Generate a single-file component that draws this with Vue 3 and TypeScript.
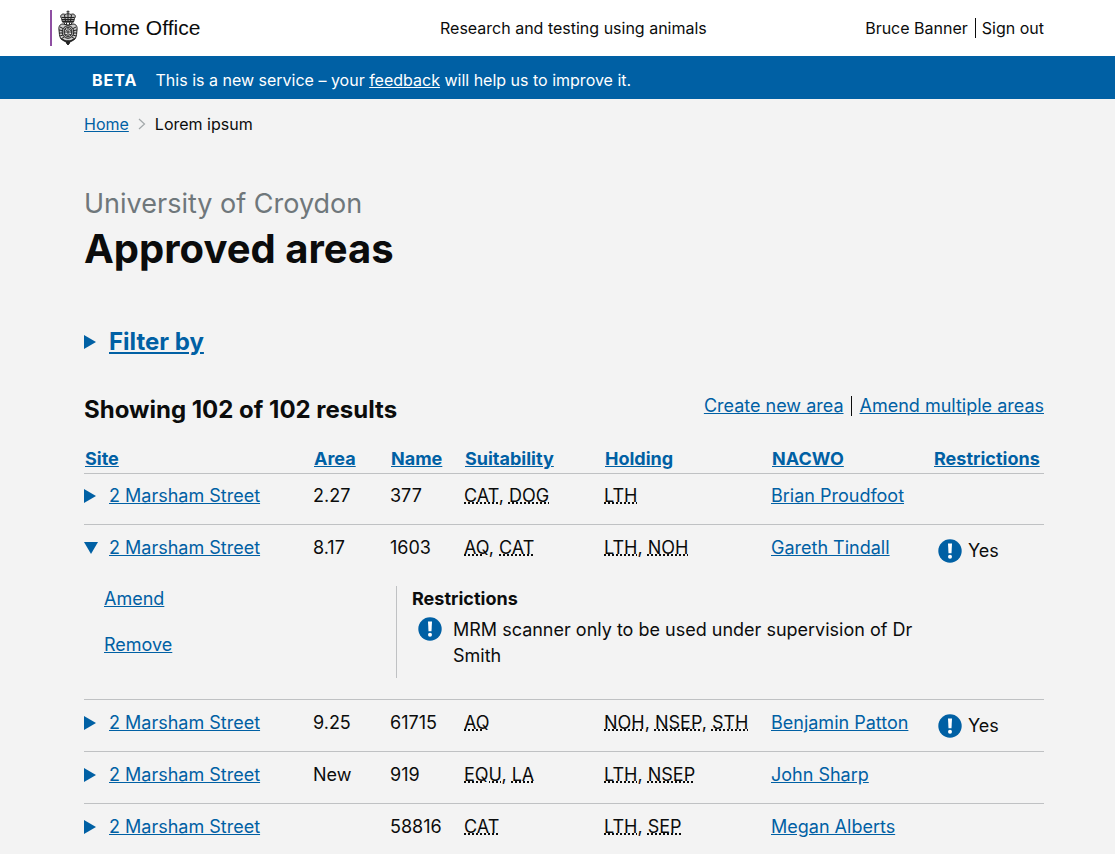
<script setup lang="ts">
import { ref } from 'vue'

interface Area {
  id: number
  site: string
  area: string
  name: string
  suitability: string[]
  holding: string[]
  nacwo: string
  restriction?: string
}

const titles: Record<string, string> = {
  CAT: 'Cats',
  DOG: 'Dogs',
  AQ: 'Aquatic animals',
  EQU: 'Equidae',
  LA: 'Large animals',
  LTH: 'Long term holding',
  NOH: 'No overnight housing',
  NSEP: 'Non-standard environmental parameters',
  STH: 'Short term holding',
  SEP: 'Standard environmental parameters',
}

const columns = ['Site', 'Area', 'Name', 'Suitability', 'Holding', 'NACWO', 'Restrictions']

const areas: Area[] = [
  { id: 1, site: '2 Marsham Street', area: '2.27', name: '377', suitability: ['CAT', 'DOG'], holding: ['LTH'], nacwo: 'Brian Proudfoot' },
  { id: 2, site: '2 Marsham Street', area: '8.17', name: '1603', suitability: ['AQ', 'CAT'], holding: ['LTH', 'NOH'], nacwo: 'Gareth Tindall', restriction: 'MRM scanner only to be used under supervision of Dr Smith' },
  { id: 3, site: '2 Marsham Street', area: '9.25', name: '61715', suitability: ['AQ'], holding: ['NOH', 'NSEP', 'STH'], nacwo: 'Benjamin Patton', restriction: 'Restricted use' },
  { id: 4, site: '2 Marsham Street', area: 'New', name: '919', suitability: ['EQU', 'LA'], holding: ['LTH', 'NSEP'], nacwo: 'John Sharp' },
  { id: 5, site: '2 Marsham Street', area: '', name: '58816', suitability: ['CAT'], holding: ['LTH', 'SEP'], nacwo: 'Megan Alberts' },
]

const open = ref<number[]>([2])
const isOpen = (id: number): boolean => open.value.includes(id)
function toggle(id: number): void {
  open.value = isOpen(id) ? open.value.filter((n) => n !== id) : [...open.value, id]
}
</script>

<template>
  <header class="header">
    <div class="container header-grid">
      <a class="logo" href="#">
        <svg class="crest" width="20" height="36" viewBox="0 0 20 36" aria-hidden="true">
          <g fill="none" stroke="#222" stroke-width="1">
            <path d="M10 .5v4M8.500 1.800h3" />
            <path d="M3.500 8.500C1 5 5 3 7 4.500 8.500 3.500 11.500 3.500 13 4.500 15 3 19 5 16.500 8.500L15.500 12h-11z" fill="#bbb" />
            <path d="M3.500 7.500h13M4 9.500h12M6.500 5l1 6M10 4v7M13.500 5l-1 6" />
            <path d="M4.500 11.500h11" stroke-width="1.600" />
            <path d="M6 12.500l1 2.500M8.500 12.500v3M11.500 12.500v3M14 12.500l-1 2.500" />
            <path d="M5 14C1.500 14 .5 17 1 20s0 6 2 9l3 2 4 1 4-1 3-2c2-3 1.500-6 2-9s-.5-6-4-6l-5 1z" fill="#ccc" />
            <ellipse cx="10" cy="22" rx="5.800" ry="6.300" fill="#aaa" />
            <ellipse cx="10" cy="22" rx="3.800" ry="4.300" fill="#eee" />
            <path d="M10 17.500v9M6 22h8M7 19.500l2 1M11 19.500l2 1M7 24l2 1M11 24l2 1" />
            <path d="M2 17l3 1.500M1 20l3 .5M1 23h3M2 26l3-1M3 29l3-2M18 17l-3 1.500M19 20l-3 .5M19 23h-3M18 26l-3-1M17 29l-3-2" />
            <path d="M4 29c3 3 9 3 12 0" stroke-width="1.400" />
            <path d="M8 32.500l2 2.500 2-2.500zM10 30v3" fill="#222" />
          </g>
        </svg>
        <span>Home Office</span>
      </a>
      <a class="service" href="#">Research and testing using animals</a>
      <nav class="user" aria-label="Account">
        <a href="#">Bruce Banner</a><span class="divider"></span><a href="#">Sign out</a>
      </nav>
    </div>
  </header>

  <div class="banner">
    <div class="container banner-row">
      <strong>BETA</strong>
      <span>This is a new service – your <a href="#">feedback</a> will help us to improve it.</span>
    </div>
  </div>

  <main class="container">
    <nav class="crumbs" aria-label="Breadcrumb">
      <a href="#">Home</a>
      <svg width="8" height="12" viewBox="0 0 8 12" aria-hidden="true">
        <path d="M1 1l5.500 5L1 11" fill="none" stroke="#a3a8aa" stroke-width="1.200" />
      </svg>
      <span>Lorem ipsum</span>
    </nav>

    <p class="caption">University of Croydon</p>
    <h1>Approved areas</h1>

    <button class="toggle filter" type="button">
      <svg class="arrow" width="12" height="14" viewBox="0 0 12 14" aria-hidden="true"><path d="M0 0l12 7L0 14z" /></svg>
      <span>Filter by</span>
    </button>

    <div class="summary">
      <h2>Showing 102 of 102 results</h2>
      <div class="actions">
        <a href="#">Create new area</a><span class="divider"></span><a href="#">Amend multiple areas</a>
      </div>
    </div>

    <table>
      <colgroup>
        <col />
        <col class="c-area" />
        <col class="c-name" />
        <col class="c-suit" />
        <col class="c-hold" />
        <col class="c-nacwo" />
        <col class="c-restr" />
      </colgroup>
      <thead>
        <tr>
          <th v-for="column in columns" :key="column" scope="col"><a href="#">{{ column }}</a></th>
        </tr>
      </thead>
      <tbody v-for="item in areas" :key="item.id">
        <tr>
          <td>
            <button class="toggle" type="button" :aria-expanded="isOpen(item.id)" @click="toggle(item.id)">
              <svg v-if="isOpen(item.id)" class="arrow arrow-down" width="14" height="12" viewBox="0 0 14 12" aria-hidden="true"><path d="M0 0h14L7 12z" /></svg>
              <svg v-else class="arrow" width="12" height="14" viewBox="0 0 12 14" aria-hidden="true"><path d="M0 0l12 7L0 14z" /></svg>
              <span>{{ item.site }}</span>
            </button>
          </td>
          <td>{{ item.area }}</td>
          <td>{{ item.name }}</td>
          <td>
            <template v-for="(code, i) in item.suitability" :key="code"><template v-if="i > 0">, </template><abbr :title="titles[code]">{{ code }}</abbr></template>
          </td>
          <td>
            <template v-for="(code, i) in item.holding" :key="code"><template v-if="i > 0">, </template><abbr :title="titles[code]">{{ code }}</abbr></template>
          </td>
          <td><a href="#">{{ item.nacwo }}</a></td>
          <td>
            <span v-if="item.restriction" class="flag">
              <svg class="alert" width="24" height="24" viewBox="0 0 24 24" aria-hidden="true">
                <circle cx="12" cy="12" r="11.700" fill="#0060a4" />
                <path d="M10 4.500h4l-.5 9.800h-3z" fill="#fff" />
                <circle cx="12" cy="17.700" r="2" fill="#fff" />
              </svg>
              <span>Yes</span>
            </span>
          </td>
        </tr>
        <tr v-if="isOpen(item.id)" class="details">
          <td colspan="7">
            <div class="panel">
              <div class="links">
                <a href="#">Amend</a>
                <a href="#">Remove</a>
              </div>
              <div class="note">
                <template v-if="item.restriction">
                  <h3>Restrictions</h3>
                  <div class="warning">
                    <svg class="alert" width="24" height="24" viewBox="0 0 24 24" aria-hidden="true">
                      <circle cx="12" cy="12" r="11.700" fill="#0060a4" />
                      <path d="M10 4.500h4l-.5 9.800h-3z" fill="#fff" />
                      <circle cx="12" cy="17.700" r="2" fill="#fff" />
                    </svg>
                    <p>{{ item.restriction }}</p>
                  </div>
                </template>
              </div>
            </div>
          </td>
        </tr>
      </tbody>
    </table>
  </main>
</template>

<style>
body {
  margin: 0;
  background: #f3f3f3;
  color: #0b0c0c;
  font-family: Inter, Roboto, 'Liberation Sans', sans-serif;
  font-size: 18px;
  line-height: 26px;
}
</style>

<style scoped>
h1, h2, h3, p {
  margin: 0;
}
a {
  color: #0060a4;
  text-decoration: underline;
}
.container {
  box-sizing: border-box;
  margin: 0 71px 0 84px;
}
.header {
  background: #fff;
}
.header-grid {
  display: grid;
  grid-template-columns: 356px 1fr auto;
  align-items: center;
  height: 56px;
  font-size: 16px;
}
.header-grid a {
  color: #0b0c0c;
  text-decoration: none;
}
.logo {
  display: flex;
  align-items: center;
  gap: 6px;
  width: max-content;
  height: 36px;
  margin-left: -34px;
  padding-left: 6px;
  border-left: 2px solid #8f4fa3;
  font-family: 'Liberation Sans', Arial, sans-serif;
  font-size: 21px;
}
.user,
.actions {
  display: flex;
  align-items: center;
}
.divider {
  width: 1px;
  height: 20px;
  margin: 0 7px;
  background: #0b0c0c;
}
.user .divider {
  margin: 0 6px 0 7px;
}
.actions {
  padding-top: 1px;
}
.actions .divider {
  width: 1px;
  margin: 0 8px 0 7px;
}
.banner {
  background: #0060a4;
  color: #fff;
  font-size: 16px;
}
.banner a {
  color: #fff;
}
.banner-row {
  display: flex;
  align-items: center;
  gap: 18px;
  height: 43px;
  padding: 5px 8px 0;
}
.banner strong {
  letter-spacing: 1px;
}
.crumbs {
  display: flex;
  align-items: center;
  gap: 9px;
  padding-top: 12px;
  font-size: 16px;
}
.caption {
  margin-top: 48px;
  color: #6f777b;
  font-size: 27px;
  line-height: 38px;
}
h1 {
  font-size: 40px;
  line-height: 52px;
}
.toggle {
  display: flex;
  align-items: center;
  gap: 13px;
  padding: 0;
  border: 0;
  background: none;
  color: #0060a4;
  font: inherit;
  cursor: pointer;
}
.toggle span {
  text-decoration: underline;
}
.arrow {
  flex: none;
  fill: #0060a4;
}
.arrow-down {
  margin-right: -2px;
}
.filter {
  margin-top: 51px;
  font-size: 24px;
  font-weight: 700;
  line-height: 32px;
}
.summary {
  display: flex;
  justify-content: space-between;
  align-items: flex-start;
  margin-top: 34px;
}
h2 {
  font-size: 24px;
  line-height: 36px;
}
table {
  width: 100%;
  margin-top: 16px;
  border-collapse: collapse;
  table-layout: fixed;
}
.c-area { width: 77px; }
.c-name { width: 74px; }
.c-suit { width: 140px; }
.c-hold { width: 167px; }
.c-nacwo { width: 162px; }
.c-restr { width: 111px; }
th {
  padding: 2px 0 1px 1px;
  border-bottom: 1px solid #bfc1c3;
  text-align: left;
}
td {
  height: 26px;
  padding: 10px 0 15px;
  vertical-align: top;
  white-space: nowrap;
}
tbody {
  border-bottom: 1px solid #bfc1c3;
}
thead + tbody td {
  padding-top: 9px;
}
tbody:last-child {
  border-bottom: 0;
}
.flag {
  display: flex;
  align-items: center;
  gap: 6px;
  height: 26px;
  margin: 3px 0 -3px 5px;
}
.alert {
  flex: none;
}
.details td {
  padding: 10px 0 21px;
  white-space: normal;
}
.panel {
  display: grid;
  grid-template-columns: 312px 1fr;
}
.links {
  display: flex;
  flex-direction: column;
  align-items: flex-start;
  gap: 20px;
  padding-left: 20px;
}
.note {
  min-height: 92px;
  box-sizing: border-box;
  padding-left: 15px;
  border-left: 1px solid #bfc1c3;
}
h3 {
  font-size: 18px;
  line-height: 26px;
}
.warning {
  display: flex;
  gap: 11px;
  max-width: 520px;
  margin-top: 5px;
  padding-left: 6px;
}
</style>
